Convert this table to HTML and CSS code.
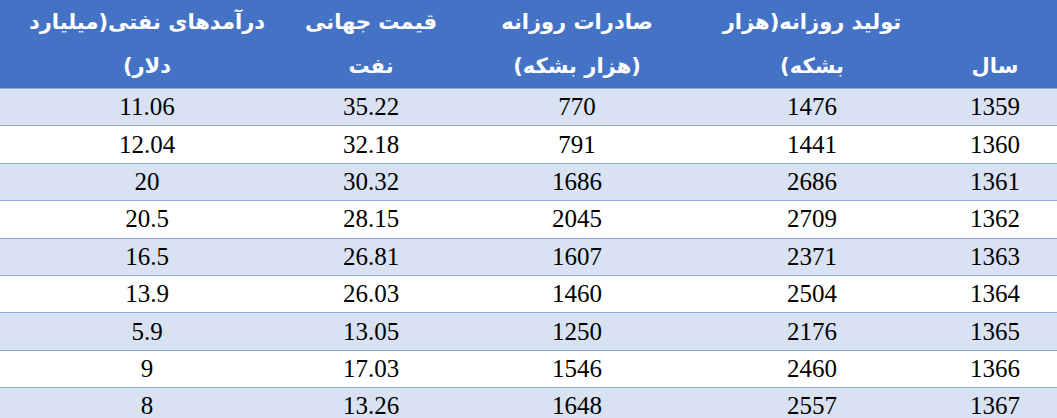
FILE: index.html
```html
<!DOCTYPE html>
<html lang="fa" dir="rtl">
<head>
<meta charset="utf-8">
<title>تولید و صادرات نفت</title>
<link rel="stylesheet" href="styles.css">
</head>
<body>
<table class="oil-table">
  <colgroup>
    <col class="c-year">
    <col class="c-prod">
    <col class="c-export">
    <col class="c-price">
    <col class="c-income">
  </colgroup>
  <thead>
    <tr>
      <th class="year-head">سال</th>
      <th>تولید روزانه(هزار<br>بشکه)</th>
      <th>صادرات روزانه<br>(هزار بشکه)</th>
      <th>قیمت جهانی<br>نفت</th>
      <th class="income">درآمدهای نفتی(میلیارد<br>دلار)</th>
    </tr>
  </thead>
  <tbody lang="en">
    <tr><td>1359</td><td>1476</td><td>770</td><td>35.22</td><td class="income">11.06</td></tr>
    <tr><td>1360</td><td>1441</td><td>791</td><td>32.18</td><td class="income">12.04</td></tr>
    <tr><td>1361</td><td>2686</td><td>1686</td><td>30.32</td><td class="income">20</td></tr>
    <tr><td>1362</td><td>2709</td><td>2045</td><td>28.15</td><td class="income">20.5</td></tr>
    <tr><td>1363</td><td>2371</td><td>1607</td><td>26.81</td><td class="income">16.5</td></tr>
    <tr><td>1364</td><td>2504</td><td>1460</td><td>26.03</td><td class="income">13.9</td></tr>
    <tr><td>1365</td><td>2176</td><td>1250</td><td>13.05</td><td class="income">5.9</td></tr>
    <tr><td>1366</td><td>2460</td><td>1546</td><td>17.03</td><td class="income">9</td></tr>
    <tr><td>1367</td><td>2557</td><td>1648</td><td>13.26</td><td class="income">8</td></tr>
  </tbody>
</table>
</body>
</html>
```
FILE: styles.css
```css
html, body {
  margin: 0;
  padding: 0;
  background: #ffffff;
}

.oil-table {
  width: 1057px;
  border-collapse: collapse;
  table-layout: fixed;
  direction: rtl;
}

.c-year { width: 124px; }
.c-prod { width: 242px; }
.c-export { width: 228px; }
.c-price { width: 184px; }
.c-income { width: 279px; }

.oil-table th {
  background: #4472c4;
  color: #ffffff;
  font-family: "DejaVu Sans", "Noto Sans", sans-serif;
  font-weight: bold;
  font-size: 21px;
  line-height: 44px;
  height: 88px;
  padding: 0;
  text-align: center;
  vertical-align: top;
  white-space: nowrap;
  border-bottom: 1px solid #8eaadb;
}

.oil-table th.year-head {
  vertical-align: bottom;
}

.oil-table td {
  font-family: "Liberation Serif", "Times New Roman", "DejaVu Serif", serif;
  font-size: 25px;
  color: #000000;
  text-align: center;
  height: 36.4px;
  padding: 0;
  border-bottom: 1px solid #8eaadb;
  vertical-align: middle;
}

.oil-table th.income,
.oil-table td.income {
  padding-left: 15px;
}

.oil-table tbody tr:nth-child(odd) td {
  background: #d9e2f3;
}

.oil-table tbody tr:nth-child(even) td {
  background: #ffffff;
}
```
